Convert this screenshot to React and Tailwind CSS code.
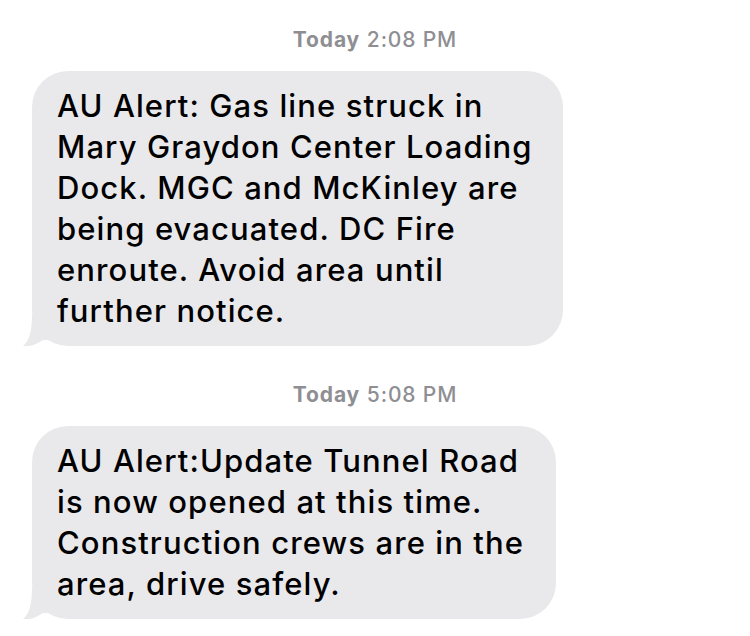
import React from "react";

const messages = [
  {
    time: "2:08 PM",
    width: "w-[531px]",
    lines: [
      "AU Alert: Gas line struck in",
      "Mary Graydon Center Loading",
      "Dock. MGC and McKinley are",
      "being evacuated. DC Fire",
      "enroute. Avoid area until",
      "further notice.",
    ],
  },
  {
    time: "5:08 PM",
    width: "w-[524px]",
    lines: [
      "AU Alert:Update Tunnel Road",
      "is now opened at this time.",
      "Construction crews are in the",
      "area, drive safely.",
    ],
  },
];

// little tail at the bottom-left of an incoming bubble
function Tail() {
  return (
    <svg
      className="absolute left-[-10px] bottom-0"
      width="34"
      height="34"
      viewBox="0 0 34 34"
    >
      <path
        d="M10 2 C10 20 7 29 1 34 C9 35 15 32 21 28 L34 28 L34 2 Z"
        fill="#e9e9eb"
      />
    </svg>
  );
}

function Bubble({ width, lines }) {
  return (
    <div className={`relative ${width} ml-[32px]`}>
      <Tail />
      <div className="relative rounded-[36px] bg-[#e9e9eb] pl-[25px] pr-4 pt-[14px] pb-[15px] text-[31px] leading-[41px] font-medium tracking-[1.1px] text-black">
        {lines.map((line, i) => (
          <div key={i} className="whitespace-nowrap">
            {line}
          </div>
        ))}
      </div>
    </div>
  );
}

export default function App() {
  return (
    <div
      className="w-[750px] h-[636px] bg-white overflow-hidden pt-[26px]"
      style={{ fontFamily: "Inter, 'Liberation Sans', sans-serif" }}
    >
      {messages.map((m, i) => (
        <div key={i} className={i > 0 ? "mt-[35px]" : ""}>
          <div className="text-center text-[21px] leading-[28px] text-[#8e8e93] tracking-[0.85px]">
            <span className="font-bold">Today</span>{" "}
            <span className="font-medium">{m.time}</span>
          </div>
          <div className="mt-[17px]">
            <Bubble width={m.width} lines={m.lines} />
          </div>
        </div>
      ))}
    </div>
  );
}
